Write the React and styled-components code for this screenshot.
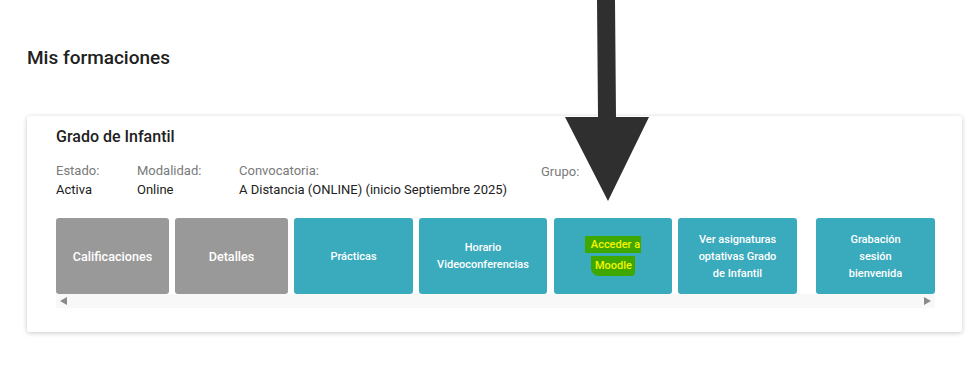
import React from 'react'
import styled, { createGlobalStyle } from 'styled-components'

const GlobalStyle = createGlobalStyle`
  body {
    margin: 0;
    background: #fff;
    font-family: Roboto, "Liberation Sans", sans-serif;
    color: #212121;
  }
`

const Page = styled.div`
  position: relative;
  width: 977px;
  height: 373px;
  padding: 47px 0 0 27px;
  box-sizing: border-box;
  overflow: hidden;
`

const PageTitle = styled.h2`
  margin: 0 0 47px;
  font-size: 19px;
  line-height: 22px;
  font-weight: 500;
  color: #212121;
`

const Card = styled.section`
  width: 935px;
  height: 216px;
  box-sizing: border-box;
  padding: 11px 27px 0 29px;
  background: #fff;
  border-radius: 3px;
  box-shadow: 0 1px 5px rgba(0, 0, 0, 0.22);
`

const CardTitle = styled.h3`
  margin: 0 0 14px;
  font-size: 16px;
  line-height: 20px;
  font-weight: 500;
`

const InfoRow = styled.div`
  display: grid;
  grid-template-columns: 81px 102px 302px auto;
  margin-bottom: 18px;
`

const InfoItem = styled.div`
  display: flex;
  flex-direction: column;
  font-size: 13px;
  line-height: 19px;
`

const Label = styled.span`
  color: #7a7a7a;
  padding-top: ${p => p.$drop || 0}px;
`

const Value = styled.span`
  color: #212121;
  min-height: 19px;
`

const Scroller = styled.div`
  width: 879px;
`

const ButtonRow = styled.div`
  display: flex;
  gap: 6px;
`

const Tile = styled.div`
  flex: 0 0 ${p => p.$w}px;
  height: 76px;
  margin-left: ${p => p.$gap || 0}px;
  box-sizing: border-box;
  border-radius: 3px;
  background: ${p => (p.$grey ? '#999999' : '#3aaabd')};
  color: #fff;
  display: flex;
  align-items: center;
  justify-content: center;
  text-align: center;
  font-size: ${p => (p.$grey ? '12.6px' : '11px')};
  line-height: 17px;
  font-weight: 500;
`

const Mark = styled.span`
  display: inline-block;
  background: #3ea800;
  color: #f4f400;
  padding: ${p => (p.$first ? '0 1px 0 6px' : '1px 3px 2px 4px')};
  border-radius: ${p => (p.$first ? '0' : '0 0 4px 8px')};
  margin-bottom: ${p => (p.$first ? '3px' : '0')};
`

const Track = styled.div`
  height: 14px;
  background: #f8f8f8;
  display: flex;
  align-items: center;
  justify-content: space-between;
  padding: 0 4px;
`

const ArrowHead = styled.span`
  width: 0;
  height: 0;
  border-top: 4px solid transparent;
  border-bottom: 4px solid transparent;
  ${p => (p.$dir === 'left' ? 'border-right: 7px solid #8a8a8a;' : 'border-left: 7px solid #8a8a8a;')}
`

const Pointer = styled.svg`
  position: absolute;
  left: 565px;
  top: 0;
`

const tiles = [
  { w: 113, grey: true, lines: ['Calificaciones'] },
  { w: 113, grey: true, lines: ['Detalles'] },
  { w: 119, lines: ['Prácticas'] },
  { w: 128, lines: ['Horario', 'Videoconferencias'] },
  { w: 118, gap: 1, moodle: true },
  { w: 119, lines: ['Ver asignaturas', 'optativas Grado', 'de Infantil'] },
  { w: 119, gap: 13, lines: ['Grabación', 'sesión', 'bienvenida'] },
]

const info = [
  { label: 'Estado:', value: 'Activa' },
  { label: 'Modalidad:', value: 'Online' },
  { label: 'Convocatoria:', value: 'A Distancia (ONLINE) (inicio Septiembre 2025)' },
  { label: 'Grupo:', value: '', drop: 1 },
]

export default function App() {
  return (
    <>
      <GlobalStyle />
      <Page>
        <PageTitle>Mis formaciones</PageTitle>
        <Card>
          <CardTitle>Grado de Infantil</CardTitle>
          <InfoRow>
            {info.map(i => (
              <InfoItem key={i.label}>
                <Label $drop={i.drop}>{i.label}</Label>
                <Value>{i.value}</Value>
              </InfoItem>
            ))}
          </InfoRow>
          <Scroller>
            <ButtonRow>
              {tiles.map((t, key) => (
                <Tile key={key} $w={t.w} $grey={t.grey} $gap={t.gap}>
                  {t.moodle ? (
                    <div>
                      <Mark $first>Acceder a</Mark>
                      <br />
                      <Mark>Moodle</Mark>
                    </div>
                  ) : (
                    <div>
                      {t.lines.map((l, i) => (
                        <React.Fragment key={i}>
                          {i > 0 && <br />}
                          {l}
                        </React.Fragment>
                      ))}
                    </div>
                  )}
                </Tile>
              ))}
            </ButtonRow>
            <Track>
              <ArrowHead $dir="left" />
              <ArrowHead $dir="right" />
            </Track>
          </Scroller>
        </Card>
        <Pointer width="86" height="202" viewBox="0 0 86 202">
          <polygon points="32,0 50,0 51,117 84,117 43,201 0,117 33,117" fill="#2f2f2f" />
        </Pointer>
      </Page>
    </>
  )
}
